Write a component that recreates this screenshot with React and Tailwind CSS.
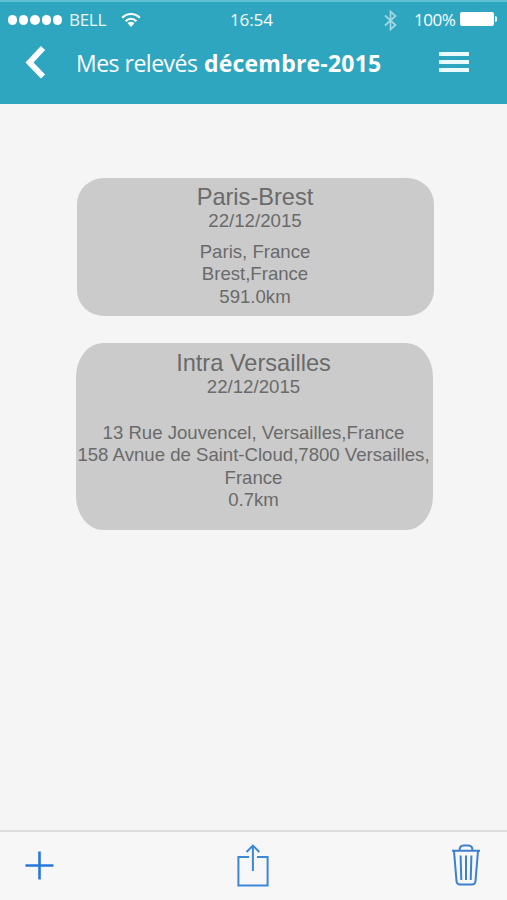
const STATEMENTS = [
  {
    title: 'Paris-Brest',
    date: '22/12/2015',
    lines: ['Paris, France', 'Brest,France', '591.0km'],
    box: 'ml-[77px] h-[138px] rounded-[27px/26px] pt-[6px] pr-[1px]',
    gap: 'mt-[9px]',
  },
  {
    title: 'Intra Versailles',
    date: '22/12/2015',
    lines: ['13 Rue Jouvencel, Versailles,France', '158 Avnue de Saint-Cloud,7800 Versailles,', 'France', '0.7km'],
    box: 'ml-[76px] h-[187px] rounded-[27px/34px] pt-[7px] pr-[2px]',
    gap: 'mt-[24px]',
  },
]

function StatusBar() {
  return (
    <div className="flex h-[36px] items-center text-[17px] leading-[36px]">
      <div className="ml-[8px] flex w-[61px] gap-[2px]">
        {[0, 1, 2, 3, 4].map((i) => (
          <span key={i} className="size-[9.2px] rounded-full bg-white" />
        ))}
      </div>
      <span className="w-[52px] tracking-[-0.3px] opacity-90">BELL</span>
      <svg className="h-[16px] w-[20px]" viewBox="0 0 20 16" fill="none" stroke="white" strokeWidth="2.2">
        <path d="M1.2 5.8C6.2 0.7 13.8 0.7 18.8 5.8" />
        <path d="M4.6 9.2C7.8 6 12.2 6 15.4 9.2" />
        <path d="M6.5 11C8.6 9.2 11.4 9.2 13.5 11L10 15Z" fill="white" stroke="none" />
      </svg>
      <span className="ml-[89px] w-[154px] tracking-[-0.1px]">16:54</span>
      <svg className="h-[21px] w-[13px] opacity-55" viewBox="0 0 13 21" fill="none" stroke="white" strokeWidth="1.7">
        <path d="M1 5.5L11.5 15L6.5 19.5V1.5L11.5 6L1 15.5" />
      </svg>
      <span className="ml-[17px] w-[46px] tracking-[-0.5px]">100%</span>
      <span className="mb-[2px] h-[14px] w-[34px] rounded-[2px] bg-white" />
      <span className="mb-[2px] ml-[1px] h-[6px] w-[2px] rounded-r-full bg-white" />
    </div>
  )
}

function Header() {
  return (
    <header className="h-[104px] border-t-2 border-[#5fc0d4] bg-[#2fa6c0] font-['Open_Sans',sans-serif] text-white">
      <StatusBar />
      <div className="flex h-[48px] items-center">
        <svg className="ml-[24px] h-[34px] w-[22px]" viewBox="0 0 22 34" fill="none" stroke="white" strokeWidth="5.8">
          <path d="M19 3L5.5 17.5L19 31.5" />
        </svg>
        <h1 className="ml-[30px] w-[363px] pt-[2px] text-[23px] leading-[44px] whitespace-nowrap">
          <span className="inline-block w-[128px] tracking-[-0.5px]">Mes relevés</span>
          <span className="font-bold tracking-[0.2px]">décembre-2015</span>
        </h1>
        <div className="flex w-[30px] flex-col gap-[4px]">
          <span className="h-[4px] bg-[#e9fbff]" />
          <span className="h-[4px] bg-[#e9fbff]" />
          <span className="h-[4px] bg-[#e9fbff]" />
        </div>
      </div>
    </header>
  )
}

function StatementCard({ title, date, lines, box, gap }) {
  return (
    <article className={`w-[357px] bg-[#cbcbcb] text-center text-[#6a6a6a] ${box}`}>
      <h2 className="text-[23.6px] leading-[26px]">{title}</h2>
      <p className="text-[18.7px] leading-[22px]">{date}</p>
      <div className={`text-[18.6px] leading-[22.3px] whitespace-nowrap ${gap}`}>
        {lines.map((line) => (
          <p key={line}>{line}</p>
        ))}
      </div>
    </article>
  )
}

function Toolbar() {
  return (
    <footer className="flex h-[70px] items-start border-t-2 border-[#dedede] bg-[#f7f7f7]">
      <svg className="mt-[19px] ml-[25px] size-[29px]" viewBox="0 0 29 29" fill="none" stroke="#2878dc" strokeWidth="2.6">
        <path d="M14.5 0.5V28.5M0.5 14.5H28.5" />
      </svg>
      <svg className="mt-[12px] ml-[182px] h-[43px] w-[34px]" viewBox="0 0 34 43" fill="none" stroke="#3d86d8" strokeWidth="2">
        <path d="M13 13H2.4V41.6H31.6V13H21" />
        <path d="M16.9 27V1.5M10.5 8L16.9 1.6L23.3 8" />
      </svg>
      <svg className="mt-[12px] ml-[181px] h-[42px] w-[30px]" viewBox="0 0 30 42" fill="none" stroke="#3d80d0" strokeWidth="2">
        <path d="M1 6.8H29M8.5 6.5C8.5 3 10 1.5 12.5 1.5H17.5C20 1.5 21.5 3 21.5 6.5" />
        <path d="M3 7L5.5 37C5.7 39.5 7 40.5 9 40.5H21C23 40.5 24.3 39.5 24.5 37L27 7" />
        <path d="M9.6 11.5L10.3 36M15 11.5V36M20.4 11.5L19.7 36" />
      </svg>
    </footer>
  )
}

export default function App() {
  return (
    <div className="flex h-[900px] w-[507px] flex-col overflow-hidden bg-[#f5f5f5] font-['Liberation_Sans',Arial,sans-serif]">
      <Header />
      <main className="flex flex-1 flex-col gap-[27px] pt-[74px]">
        {STATEMENTS.map((s) => (
          <StatementCard key={s.title} {...s} />
        ))}
      </main>
      <Toolbar />
    </div>
  )
}
